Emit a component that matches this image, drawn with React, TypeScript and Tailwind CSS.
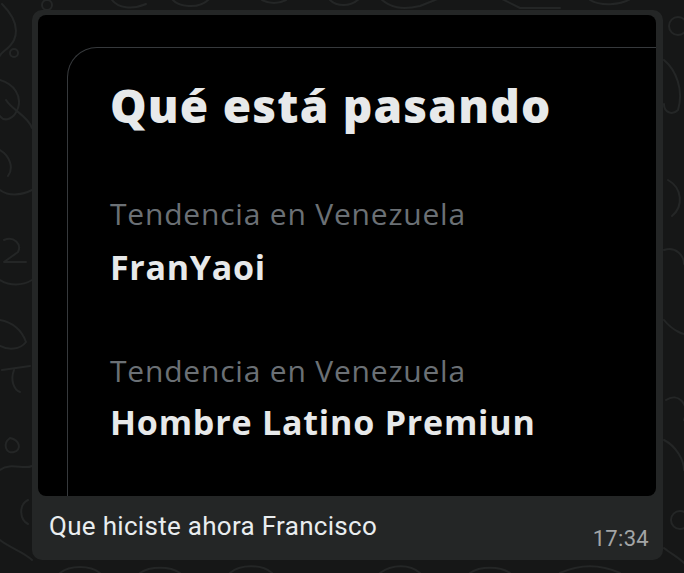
import React from "react";

function Doodles() {
  return (
    <svg className="absolute inset-0" width="684" height="573" viewBox="0 0 684 573" fill="none" stroke="#242626" strokeWidth="2" strokeLinecap="round" strokeLinejoin="round">
      <path d="M2 4 C 12 14, 20 26, 14 40 C 8 52, 0 50, -2 60" />
      <circle cx="47" cy="5" r="5" />
      <path d="M112 0 C 118 8, 132 10, 146 4" />
      <path d="M170 -4 C 176 8, 200 10, 210 -2" />
      <path d="M262 0 C 270 4, 278 4, 286 0" />
      <path d="M330 0 C 336 6, 350 8, 360 -2" />
      <path d="M380 -2 C 390 8, 402 10, 420 6 L 440 -2" />
      <path d="M500 -2 L 520 8 L 560 8" />
      <path d="M590 0 C 600 6, 620 6, 632 -2" />
      <circle cx="14" cy="53" r="4" />
      <path d="M0 80 C 14 84, 22 96, 18 108 C 14 120, 4 122, 0 116" />
      <path d="M6 100 C 12 110, 28 116, 32 128" />
      <path d="M0 150 C 10 156, 14 168, 8 176" />
      <path d="M0 190 C 8 196, 20 196, 32 190" />
      <path d="M4 240 C 14 236, 22 244, 18 252 L 4 262 L 26 262" />
      <path d="M0 280 C 10 286, 22 286, 32 280" />
      <path d="M0 320 C 12 322, 22 330, 26 342 C 20 350, 8 350, 0 346" />
      <path d="M2 370 L 30 366" />
      <path d="M14 370 C 10 380, 14 390, 20 392" />
      <path d="M10 438 C 2 444, 6 454, 14 452 C 22 450, 20 440, 10 438" />
      <path d="M0 470 C 10 462, 24 470, 32 466" />
      <path d="M28 500 C 18 505, 20 520, 28 524" />
      <path d="M0 540 C 10 548, 24 552, 32 560" />
      <path d="M60 573 C 70 565, 90 565, 100 573" />
      <path d="M140 573 C 150 566, 170 566, 180 573" />
      <path d="M230 573 C 240 564, 262 564, 272 573" />
      <path d="M380 573 C 392 564, 410 564, 420 573" />
      <path d="M470 573 C 480 566, 500 566, 510 573" />
      <path d="M560 573 C 580 564, 600 564, 620 573" />
      <circle cx="678" cy="26" r="9" />
      <path d="M664 60 C 676 70, 684 90, 678 110 C 672 116, 664 112, 664 104" />
      <path d="M668 180 C 682 188, 684 206, 672 216" />
      <path d="M664 250 C 676 246, 684 256, 684 264" />
      <path d="M664 320 C 672 330, 684 336, 690 334" />
      <path d="M666 400 C 678 392, 690 404, 684 420" />
      <path d="M664 440 C 676 446, 684 460, 684 470" />
      <circle cx="680" cy="520" r="9" />
      <path d="M664 548 C 674 556, 684 560, 690 570" />
    </svg>
  );
}

export default function App() {
  return (
    <div
      className="relative w-[684px] h-[573px] overflow-hidden bg-[#161717]"
      style={{ fontFamily: "Roboto, 'Open Sans', sans-serif" }}
    >
      <Doodles />
      <div className="relative pt-[10px] pl-[32px]">
        <div className="w-[631px] h-[550px] rounded-[10px] bg-[#242626] pt-[5px] pl-[6px] pr-[7px]">
          <div className="h-[481px] rounded-[8px] bg-black overflow-hidden pt-[32px] pl-[29px]">
            <div
              className="h-full border-l border-t border-[#36393c] rounded-tl-[30px] pl-[42px] pt-[34px]"
              style={{ fontFamily: "'Open Sans', sans-serif" }}
            >
              <div className="text-[46px] leading-none font-extrabold text-[#e7e9ea] tracking-[1.2px]">
                Qué está pasando
              </div>
              <div className="mt-[71px] text-[30px] leading-none text-[#6b7075] tracking-[0.8px]">
                Tendencia en Venezuela
              </div>
              <div className="mt-[21px] text-[34px] leading-none font-bold text-[#e7e9ea] tracking-[0.7px]">
                FranYaoi
              </div>
              <div className="mt-[72px] text-[30px] leading-none text-[#6b7075] tracking-[0.8px]">
                Tendencia en Venezuela
              </div>
              <div className="mt-[19px] text-[34px] leading-none font-bold text-[#e7e9ea] tracking-[0.8px]">
                Hombre Latino Premiun
              </div>
            </div>
          </div>
          <div className="flex justify-between pl-[11px] pr-[7px]">
            <div className="mt-[17px] text-[26px] leading-none text-[#e9edef] tracking-[0.3px]">
              Que hiciste ahora Francisco
            </div>
            <div className="mt-[32px] text-[22px] leading-none text-[#a3a5a6] tracking-[0.3px]">
              17:34
            </div>
          </div>
        </div>
      </div>
    </div>
  );
}
